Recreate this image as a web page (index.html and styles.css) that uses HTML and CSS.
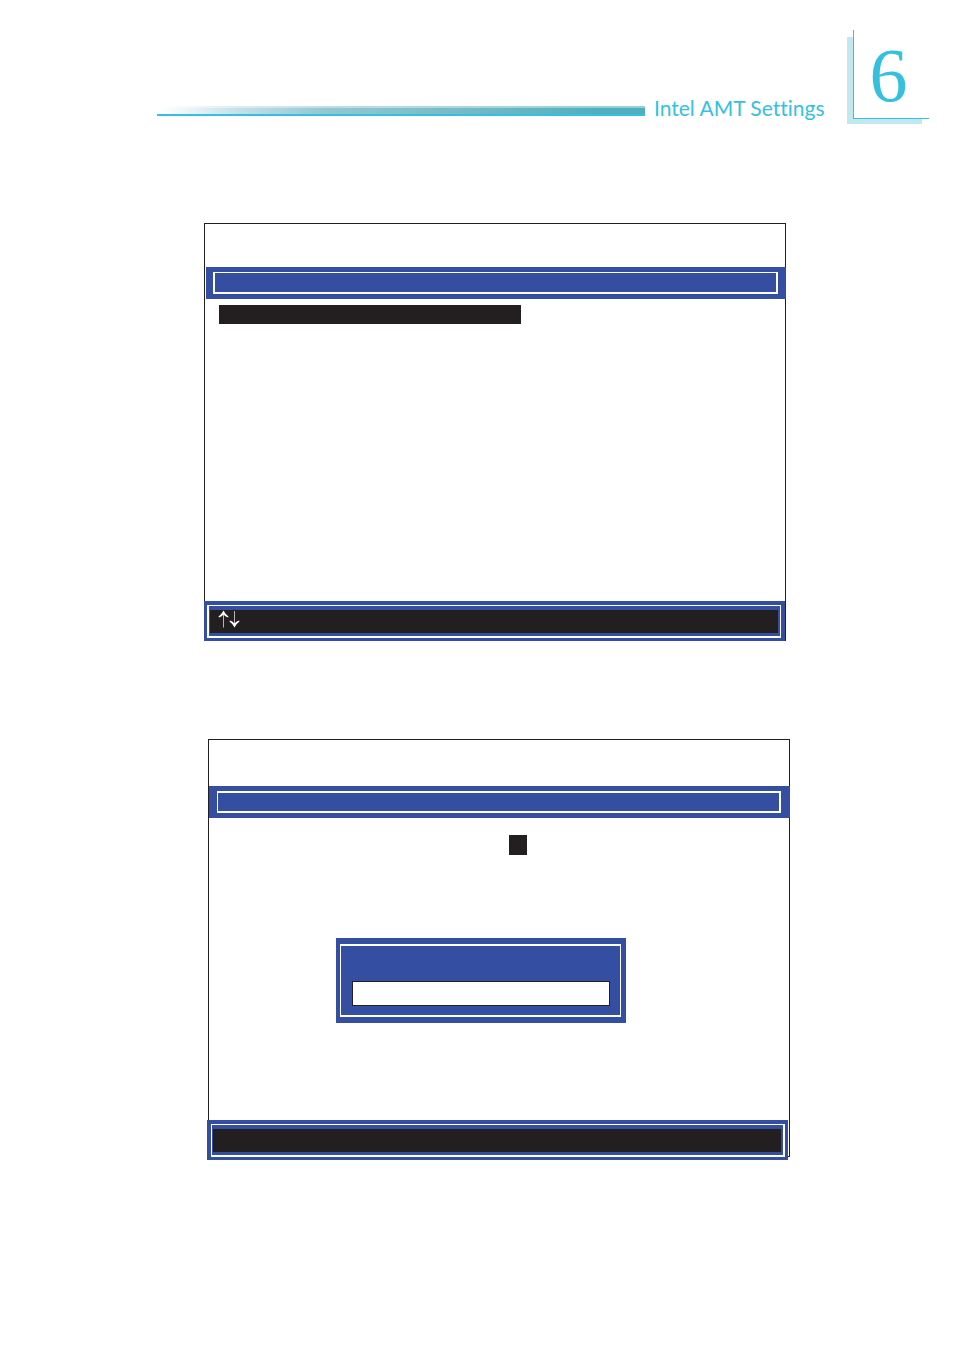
FILE: index.html
```html
<!DOCTYPE html>
<html lang="en">
<head>
  <meta charset="UTF-8" />
  <meta name="viewport" content="width=device-width, initial-scale=1.0"/>
  <title>Intel AMT Settings</title>
  <link rel="stylesheet" href="styles.css">
</head>
<body>
  <header class="page-header">
    <div class="header-rule"></div>
    <h1>Intel AMT Settings</h1>
    <div class="chapter">
      <div class="chapter-number">6</div>
    </div>
  </header>

  <main>
    <!-- Menu screen -->
    <section class="screen menu-screen">
      <div class="title-bar"><div class="title-frame"></div></div>
      <div class="screen-body">
        <div class="selected-row"></div>
      </div>
      <div class="status-bar">
        <div class="status-frame">
          <div class="status-keys">
            <svg class="arrows" viewBox="0 0 22 18" role="img" aria-label="Up and down arrow keys">
              <path class="shaft" d="M5.5 3v14.5M16.500 1v14"/>
              <path class="head" d="M5.500 .5Q7.500 4.500 10.500 6.500L10 7.500Q7 6.500 5.500 4.500Q4 6.500 1 7.500L.5 6.500Q3.500 4.500 5.500 .5Z"/>
              <path class="head" d="M16.500 17.500Q18.500 13.500 21.500 11.500L21 10.500Q18 11.500 16.500 13.500Q15 11.500 12 10.500L11.500 11.500Q14.500 13.500 16.500 17.500Z"/>
            </svg>
          </div>
        </div>
      </div>
    </section>

    <!-- Input screen -->
    <section class="screen input-screen">
      <div class="title-bar"><div class="title-frame"></div></div>
      <div class="screen-body">
        <div class="selected-value"></div>
        <div class="dialog">
          <div class="dialog-frame">
            <input type="text" class="dialog-input" aria-label="Value">
          </div>
        </div>
      </div>
      <div class="status-bar">
        <div class="status-frame">
          <div class="status-keys"></div>
        </div>
      </div>
    </section>
  </main>
</body>
</html>
```
FILE: styles.css
```css
* {
  box-sizing: border-box;
}

body {
  margin: 0;
  background: #fff;
  color: #231f20;
  font-family: Lato, "Liberation Sans", sans-serif;
}

/* Header */
.page-header {
  display: flex;
  align-items: flex-start;
  padding: 30px 25px 0 157px;
  color: #35c1dd;
}

.header-rule {
  flex: 1;
  height: 10px;
  margin-top: 76px;
  border-bottom: 2px solid #35c1dd;
  background:
    linear-gradient(rgba(255, 255, 255, 0.4), rgba(255, 255, 255, 0.4)) top / 100% 2px no-repeat,
    linear-gradient(to right, #fff 1%, #c2e0e9 17%, #93c8d3 34%, #78bcc8 60%, #50afbf 90%);
}

h1 {
  width: 168px;
  margin: 65px 25px 0 9px;
  font-size: 21px;
  line-height: 26px;
  font-weight: 400;
  font-variant-ligatures: none;
  white-space: nowrap;
}

.chapter {
  width: 75px;
  height: 87px;
  margin: 7px 7px 0 0;
  background: #c1e7ef;
}

.chapter-number {
  width: 76px;
  height: 89px;
  margin: -7px 0 0 6px;
  padding-right: 6px;
  border-left: 1px solid #35c1dd;
  border-bottom: 1px solid #35c1dd;
  background: #fff;
  font-family: "Liberation Serif", serif;
  font-size: 76px;
  line-height: 90px;
  text-align: center;
}

/* Screens */
main {
  padding: 99px 164px 190px 204px;
}

.screen {
  display: flex;
  flex-direction: column;
  border: 1px solid #231f20;
}

.menu-screen {
  margin-right: 4px;
}

.input-screen {
  margin: 98px 0 0 4px;
}

.title-bar {
  height: 32px;
  padding: 5px 8px;
  background: #344fa2;
}

.title-frame {
  height: 22px;
  border: 2px solid #fff;
}

.menu-screen .title-bar {
  margin: 43px -1px 0 1px;
  padding-left: 7px;
}

.menu-screen .title-frame {
  border-top-width: 1px;
}

.input-screen .title-bar {
  margin: 46px -1px 0 0;
  padding-right: 9px;
}

.input-screen .title-frame {
  border-left-width: 1px;
}

.screen-body {
  min-height: 302px;
}

.selected-row {
  width: 52%;
  height: 19px;
  margin: 6px 0 0 14px;
  background: #231f20;
}

.selected-value {
  width: 18px;
  height: 20px;
  margin: 17px 0 0 300px;
  background: #231f20;
}

/* Dialog */
.dialog {
  width: 50%;
  height: 85px;
  margin: 83px 0 0 127px;
  padding: 6px 5px 6px 4px;
  background: #344fa2;
}

.dialog-frame {
  height: 73px;
  padding: 35px 10px 0 11px;
  border: 1px solid #fff;
  border-width: 2px 1px;
}

.dialog-input {
  display: block;
  width: 100%;
  height: 25px;
  padding: 0 6px;
  border: 1px solid #231f20;
  border-radius: 0;
  background: #fff;
  font: inherit;
  outline: none;
}

/* Status bar */
.status-bar {
  height: 40px;
  padding: 4px 4px 3px 3px;
  background: #344fa2;
}

.status-frame {
  height: 33px;
  padding: 4px 2px 3px 1px;
  border: 1px solid #fff;
  border-width: 1px 1px 2px 2px;
}

.status-keys {
  height: 23px;
  padding-left: 8px;
  background: #231f20;
}

.arrows {
  display: block;
  width: 22px;
  height: 18px;
}

.arrows .shaft {
  fill: none;
  stroke: #b5b3b3;
  stroke-width: 1;
}

.arrows .head {
  fill: #fff;
}

.menu-screen .status-bar {
  margin: 0 0 -1px -1px;
}

.input-screen .status-bar {
  margin: 0 1px -4px -2px;
  padding: 4px 3px 3px 4px;
}

.input-screen .status-frame {
  border-width: 1px 2px 2px 1px;
}
```
